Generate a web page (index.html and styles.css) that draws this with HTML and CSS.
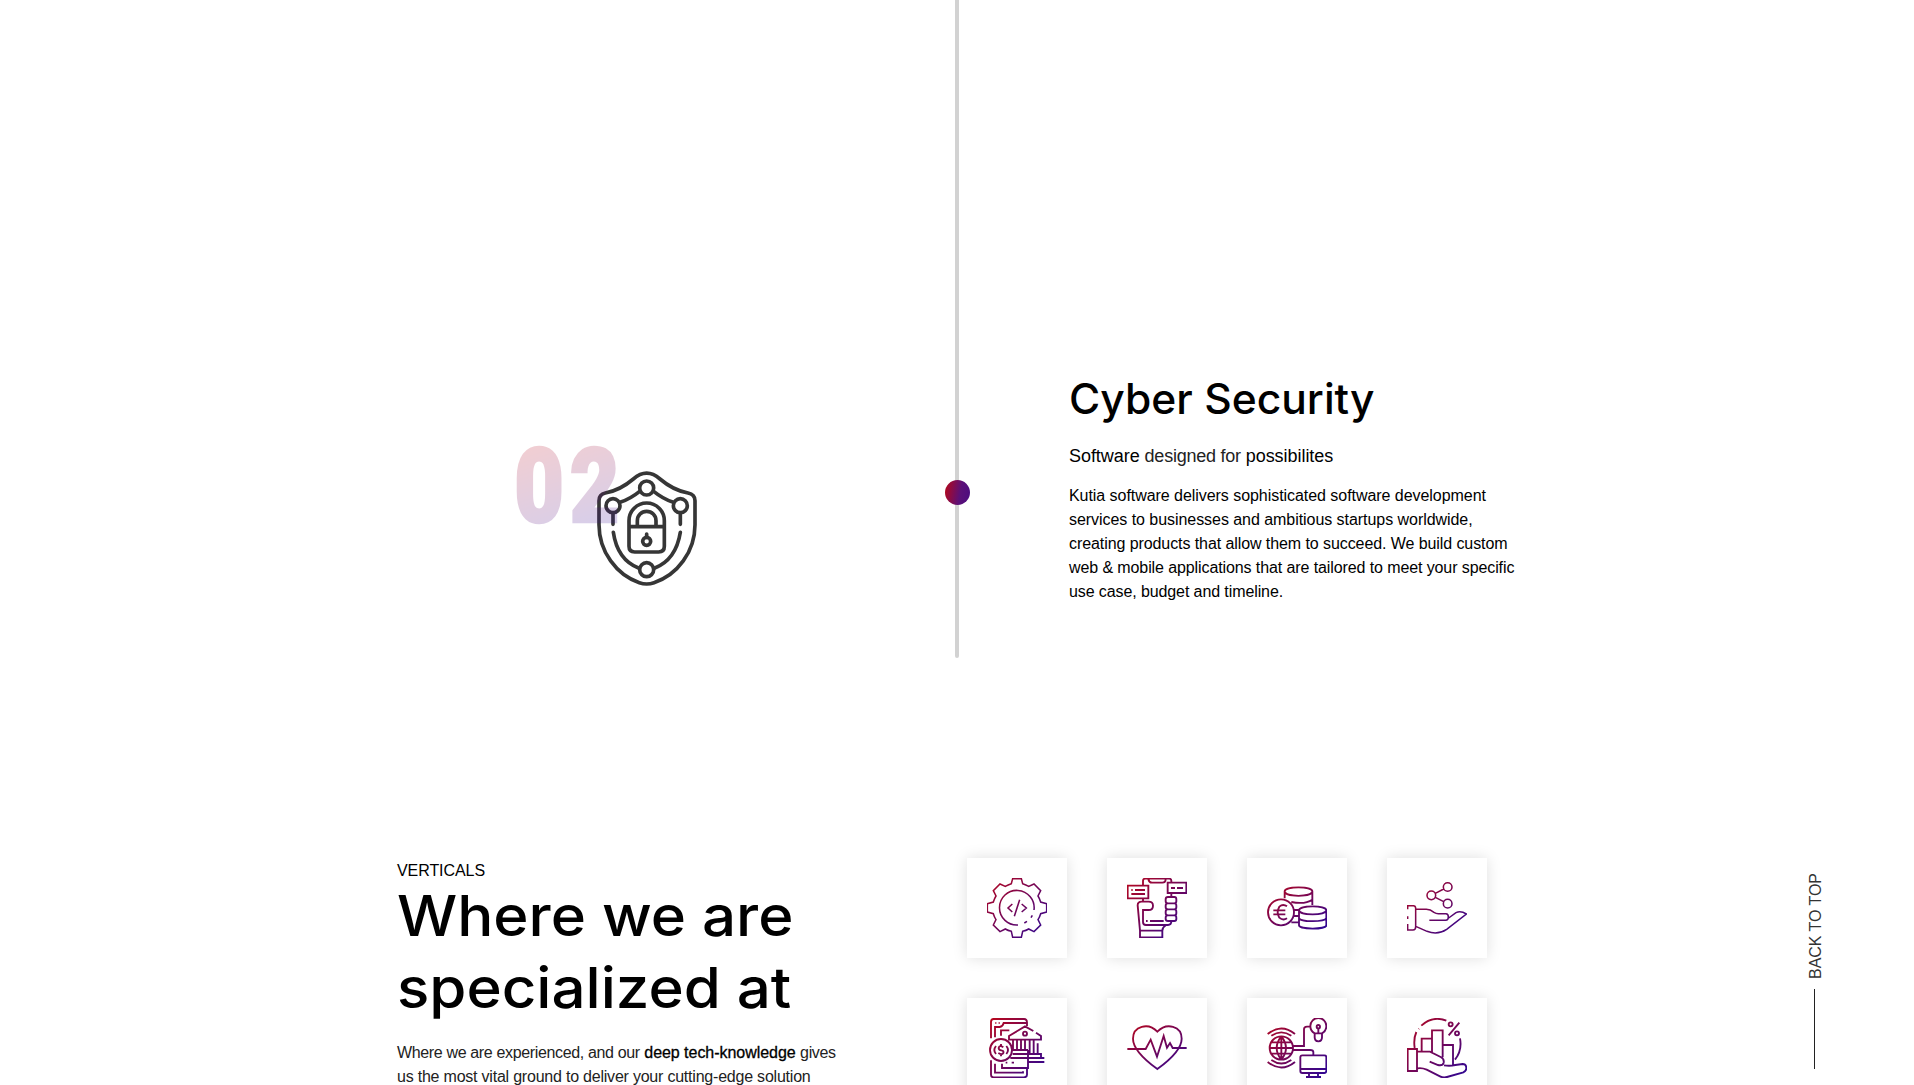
FILE: index.html
```html
<!DOCTYPE html>
<html lang="en">
<head>
<meta charset="utf-8">
<title>Kutia</title>
<link rel="stylesheet" href="styles.css">
</head>
<body>
<svg class="defs" aria-hidden="true">
  <defs>
    <linearGradient id="brand" x1="0" y1="0" x2="1" y2="1"><stop offset="0" stop-color="#b8071d"/><stop offset="1" stop-color="#2b0696"/></linearGradient>
    <linearGradient id="digits" x1="0.2" y1="0" x2="0.5" y2="1"><stop offset="0.1" stop-color="#c21020"/><stop offset="1" stop-color="#2b0fa6"/></linearGradient>
  </defs>
</svg>
<main>
  <section class="timeline">
    <div class="art">
      <svg class="shield" viewBox="0 0 660 510">
        <g fill="none" stroke="#363636" stroke-width="11" stroke-linecap="round" stroke-linejoin="round">
          <path d="M297 284V212Q297 193 316 189Q360 181 400 147Q440 112 480 147Q520 181 564 189Q585 193 585 212V284C585 365 532 435 462 458Q440 466 418 458C350 435 297 365 297 284Z"/>
          <circle cx="440" cy="174" r="21"/><circle cx="339" cy="227" r="21"/><circle cx="541" cy="227" r="21"/><circle cx="440" cy="419" r="21"/>
          <path d="M339 250V283M541 250V283M360 217Q392 206 419 184M461 184Q488 206 520 217M340 307Q352 390 417 415M541 307Q528 390 463 415"/>
          <path d="M387 290V272A53 53 0 0 1 493 272V349Q493 366 476 366H404Q387 366 387 349ZM387 290H493M412 288V272A28 28 0 0 1 468 272V288M440 312V322"/>
          <circle cx="440" cy="334" r="12"/>
        </g>
        <text class="number" fill="url(#digits)" stroke="url(#digits)" transform="translate(43 277) scale(.83 1)" letter-spacing="21">02</text>
      </svg>
    </div>
    <div class="rail"><span class="dot"></span></div>
    <div class="service">
      <h2><span class="wide">Cyber Security</span></h2>
      <p class="lead">Software <span class="soft">designed for</span> possibilites</p>
      <p class="copy"><span class="t1">Kutia software delivers sophisticated software development</span><br><span class="t1">services to businesses and ambitious startups worldwide,</span><br><span class="t2">creating products that allow them to succeed. We build custom</span><br><span class="t3">web &amp; mobile applications that are tailored to meet your specific</span><br><span class="t3">use case, budget and timeline.</span></p>
    </div>
  </section>
  <section class="verticals">
    <div class="intro">
      <p class="eyebrow">VERTICALS</p>
      <h1><span class="wide">Where we are</span><br><span class="wide">specialized at</span></h1>
      <p class="copy soft"><span class="t5">Where we are experienced, and our</span> <b>deep tech-knowledge</b> <span class="t5">gives</span><br><span class="t4">us the most vital ground to deliver your cutting-edge solution</span></p>
    </div>
    <div class="cards">
      <div class="card"><svg viewBox="81 84 180 180"><path class="thin" d="M158 86H184L188 101Q198 104 206 109L222 102L242 122L234 138Q239 146 242 156L260 161V186L242 191Q239 201 234 209L242 225L222 245L206 237Q198 242 188 244L184 262H158L154 244Q144 242 136 237L120 245L100 225L108 209Q103 201 100 191L82 186V161L100 156Q103 146 108 138L100 122L120 102L136 109Q144 104 154 101ZM222 180A52 52 0 1 0 174 225M217 196L213 203M201 214L193 219M157 162L144 174L157 186M185 162L199 174L185 186M179 149L163 199"/></svg></div>
      <div class="card"><svg viewBox="501 84 180 180"><path d="M503 107H565V145H503ZM623 98H679V129H623ZM514 120H518M525 120H555M514 132H555M633 114H645M651 114H669M549 107V92Q549 86 556 86H627Q634 86 634 92V97M565 87Q567 98 576 98H607Q617 98 617 87M549 147V155M634 130V140M540 242L533 166Q533 155 545 155H566Q579 155 579 167Q579 180 566 180H549V216Q549 225 558 225H624Q634 225 634 214M618 225Q607 232 607 242M540 242H607V262H540ZM558 213H563M570 213H611M624 141H643Q649 141 649 148V154Q649 160 643 160H624Q617 160 617 154V148Q617 141 624 141M624 160H643Q649 160 649 167V172Q649 178 643 178H624Q617 178 617 172V167Q617 160 624 160M624 178H643Q649 178 649 185V190Q649 196 643 196H624Q617 196 617 190V185Q617 178 624 178M624 196H643Q649 196 649 203V207Q649 213 643 213H624Q617 213 617 207V203Q617 196 624 196"/></svg></div>
      <div class="card"><svg viewBox="111 84 180 180"><path d="M192 187A39 39 0 1 1 114 187A39 39 0 1 1 192 187M171 169Q159 160 148 170Q138 187 148 203Q159 213 171 205M130 181H166M130 193H166M164 145V124C164 108 247 108 247 124C247 142 164 142 164 124M247 124V165M184 156Q225 164 247 149M193 180H206M192 198H207M184 217H207M207 181C207 165 289 165 289 181C289 197 207 197 207 181V226C207 239 289 239 289 226V181M207 203C207 217 289 217 289 203"/></svg></div>
      <div class="card"><svg viewBox="531 84 180 180"><path class="thin" d="M666 111A13 13 0 1 1 640 111A13 13 0 1 1 666 111M617 136A13 13 0 1 1 591 136A13 13 0 1 1 617 136M666 161A13 13 0 1 1 640 161A13 13 0 1 1 666 161M616 130L641 117M616 142L641 155M533 178V167H550Q557 167 557 175V230Q557 240 549 240H533V222M533 199V207M559 178H589Q601 178 612 187Q618 191 625 191H648Q655 191 655 201Q655 211 647 211H598M656 204L678 188Q692 181 709 192L650 238Q623 256 591 244L559 230"/></svg></div>
      <div class="card"><svg viewBox="81 504 180 180"><path d="M201 518Q201 507 192 507H101Q93 507 93 516V565M93 631V674Q93 682 101 682H191Q201 682 201 674V655M106 519H109M116 519H119M201 528V519H131Q128 530 119 531H105V562M105 641V668H189V664M123 557V541H148M126 641V654H204V600M137 638H142M155 638H162M156 600A33 33 0 1 1 90 600A33 33 0 1 1 156 600M108 588Q98 600 108 612M139 588Q149 600 139 612M130 592Q118 584 116 594Q116 600 124 601Q132 602 130 609Q126 616 115 609M123 582V588M123 613V619M228 548L243 558V569H147V558L195 529L220 543M201 551A6 6 0 1 1 189 551A6 6 0 1 1 201 551M159 571V598M171 571V598M183 571V598M195 571V598M209 571V610M221 571V610M233 580V610M158 600H204M158 612H243V624H253M151 624H243M205 636H253"/></svg></div>
      <div class="card"><svg viewBox="501 504 180 180"><path d="M502 597H557L572 569L591 620L611 558L621 593L630 579L638 594H680M592 657Q519 604 519 566C519 528 565 516 592 545C620 516 665 528 665 566Q665 604 592 657Z"/></svg></div>
      <div class="card"><svg viewBox="111 504 180 180"><path d="M189 594A35 35 0 1 1 119 594A35 35 0 1 1 189 594M119 594H189M125 577H183M125 611H183M154 559V629M154 559Q126 594 154 629M154 559Q182 594 154 629M113 552Q154 519 195 552M124 557Q154 537 184 557M113 636Q154 669 195 636M124 630Q154 651 184 630M189 588H222V538Q222 530 231 530H239M190 600H240Q250 600 250 606V615M254 550Q241 543 241 528A24 24 0 0 1 289 528Q289 543 276 550V562Q276 574 265 574Q254 574 254 562ZM254 550H276M270 530A5 5 0 1 1 260 530A5 5 0 1 1 270 530M265 536V549M217 616H283Q289 616 289 622V662Q289 669 283 669H217Q211 669 211 662V622Q211 616 217 616M211 657H289M237 671V680M264 671V680M228 681H273"/></svg></div>
      <div class="card"><svg viewBox="531 504 180 180"><path d="M533 597H561V663H533ZM554 594Q550 566 559 546M566 537L567 536M574 527Q607 496 649 512M690 565Q697 601 675 629M668 523A6 6 0 1 1 656 523A6 6 0 1 1 668 523M687 550A6 6 0 1 1 675 550A6 6 0 1 1 687 550M688 518L656 556M575 603V566H605M606 609V541H638V622M638 585H669V646M563 605H600L632 621Q643 626 641 638Q638 648 624 645L599 635M642 646Q660 649 676 645L698 642Q709 642 709 655Q709 663 700 667L651 681Q640 684 630 679L590 659Q576 653 563 655"/></svg></div>
    </div>
  </section>
</main>
<a class="to-top"><span>BACK TO TOP</span><i></i></a>
</body>
</html>
```
FILE: styles.css
```css
* { box-sizing: border-box; }
html, body { height: 100%; }
body { margin: 0; overflow: hidden; background: #fff; color: #000; font: 16px/24px "Liberation Sans", sans-serif; position: relative; }
h1, h2, p { margin: 0; white-space: nowrap; }
.defs { position: absolute; width: 0; height: 0; }

/* Timeline */
.timeline { display: grid; grid-template-columns: 955px 4px 1fr; height: 658px; }
.art { padding: 430px 0 0 500px; }
.shield { display: block; width: 220px; height: 170px; overflow: visible; }
.number { font: 900 310px Roboto, sans-serif; stroke-width: 8px; opacity: .2; }
.rail { background: #d2d2d2; border-radius: 0 0 2px 2px; position: relative; }
.dot { position: absolute; left: -10px; top: 480px; width: 25px; height: 25px; border-radius: 50%; background: linear-gradient(100deg, #b0081f 5%, #5b1078 60%, #4b0c80); }
.service { padding: 373px 0 0 110px; }
h1, h2 { font-family: Inter, sans-serif; font-weight: 500; }
.wide { display: inline-block; transform-origin: 0 50%; }
h2 { font-size: 42px; line-height: 52px; }
h2 .wide { transform: scaleX(1.014); }
.lead { margin-top: 17px; font-size: 18px; line-height: 28px; letter-spacing: -.05px; }
.lead .soft { letter-spacing: -.24px; }
.service .copy { margin-top: 14px; }
.soft { color: #222; }
.t1 { letter-spacing: -.05px; }
.t2 { letter-spacing: -.082px; }
.t3 { letter-spacing: -.1px; }
.t4 { letter-spacing: -.216px; }
.t5 { letter-spacing: -.35px; }

/* Verticals */
.verticals { display: grid; grid-template-columns: 570px auto; padding: 200px 0 0 397px; }
.intro { padding-top: 1px; }
.eyebrow { letter-spacing: -.07px; }
h1 { font-size: 56px; line-height: 72px; margin-top: -3px; }
h1 .wide { transform: scaleX(1.072); }
.intro .copy { margin-top: 17px; }
b { font-weight: 400; color: #000; letter-spacing: -.04px; -webkit-text-stroke: .3px #000; }
.cards { display: grid; grid-template-columns: repeat(4, 100px); grid-auto-rows: 100px; gap: 40px; }
.card { padding: 20px; background: #fff; box-shadow: 0 0 14px rgba(0, 0, 0, .13); }
.card svg { display: block; width: 60px; height: 60px; }
.card path { fill: none; stroke: url(#brand); stroke-width: 5.6; }
.card path.thin { stroke-width: 4.6; }

/* Back to top */
.to-top { position: absolute; left: 1804px; top: 873px; display: flex; flex-direction: column; align-items: flex-start; gap: 10px; color: #333; }
.to-top span { writing-mode: vertical-rl; transform: rotate(180deg); white-space: nowrap; letter-spacing: -.05px; }
.to-top i { width: 1px; height: 80px; margin-left: 10px; background: #222; }
```
